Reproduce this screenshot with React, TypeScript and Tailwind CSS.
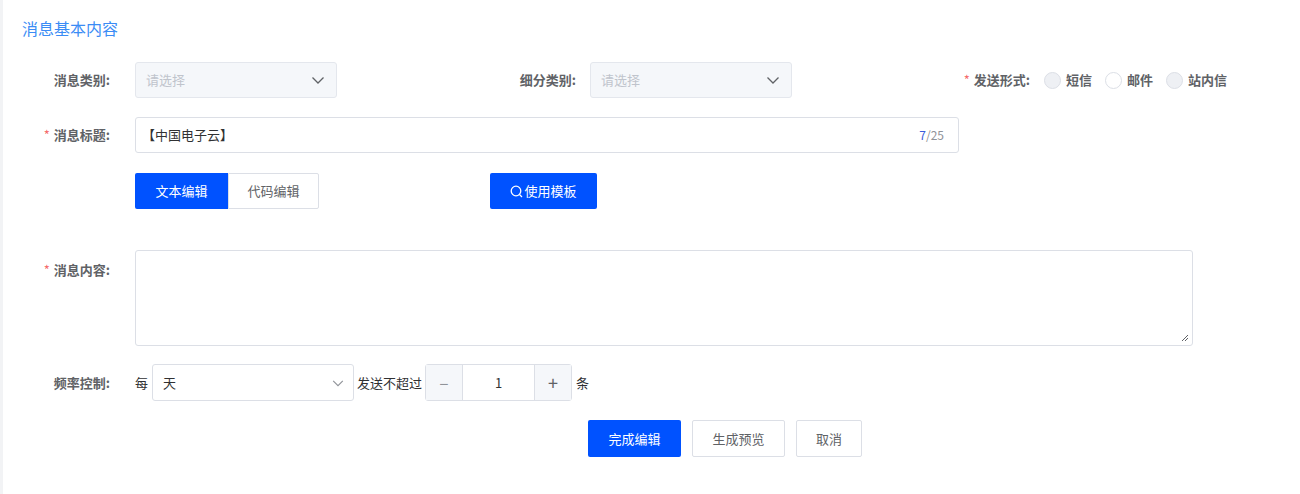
import React from "react";

const Chevron = ({ c = "#606266", s = 16 }: { c?: string; s?: number }) => (
  <svg width={s} height={s} viewBox="0 0 16 16" fill="none"><path d="M2.5 5.5L8 11l5.5-5.5" stroke={c} strokeWidth="1.3" /></svg>
);

const Label = ({ t, req, w = "w-[121px]" }: { t: string; req?: boolean; w?: string }) => (
  <div className={`${w} shrink-0 text-right pr-[14px] text-[13px] font-bold text-[#606266]`}>
    {req && <span className="text-[#f56c6c] mr-1 font-normal">*</span>}
    {t}
  </div>
);

const Radio = ({ t, grey }: { t: string; grey?: boolean }) => (
  <div className="flex items-center mr-[13px]">
    <span className={`w-[17px] h-[17px] rounded-full border border-[#dcdfe6] ${grey ? "bg-[#eef0f4]" : "bg-white"} mr-[5px]`} />
    <span className="text-[13px] font-bold text-[#606266]">{t}</span>
  </div>
);

export default function App() {
  return (
    <div className="w-[1300px] h-[494px] bg-white border-l-[3px] border-[#f2f3f5] text-[13px] text-[#303133]" style={{ fontFamily: '"Noto Sans CJK SC","Liberation Sans",sans-serif' }}>
      <div className="pt-[16px] pl-[19px] text-[16px] text-[#3b8cf5] leading-[24px]">消息基本内容</div>
      <div className="pl-0">
        <div className="flex items-center mt-[22px] h-[36px]">
          <Label t="消息类别:" />
          <div className="w-[202px] h-[36px] ml-[11px] bg-[#f5f7fa] border border-[#e4e7ed] rounded-[3px] flex items-center justify-between px-[10px] text-[#c0c4cc]">
            请选择<Chevron />
          </div>
          <div className="w-[253px] text-right pr-[14px] text-[13px] font-bold text-[#606266]">细分类别:</div>
          <div className="w-[202px] h-[36px] bg-[#f5f7fa] border border-[#e4e7ed] rounded-[3px] flex items-center justify-between px-[10px] text-[#c0c4cc]">
            请选择<Chevron />
          </div>
          <div className="w-[252px] text-right pr-[14px] text-[13px] font-bold text-[#606266]"><span className="text-[#f56c6c] mr-1 font-normal">*</span>发送形式:</div>
          <Radio t="短信" grey />
          <Radio t="邮件" />
          <Radio t="站内信" grey />
        </div>
        <div className="flex items-center mt-[19px] h-[36px]">
          <Label t="消息标题:" req />
          <div className="w-[824px] h-[36px] ml-[11px] border border-[#dcdfe6] rounded-[3px] flex items-center justify-between pl-[6px] pr-[14px]">
            <span className="text-[#303133]">【中国电子云】</span>
            <span className="text-[12px] text-[#909399]"><span className="text-[#3b5bdb]">7</span>/25</span>
          </div>
        </div>
        <div className="flex items-center mt-[20px] h-[36px] ml-[132px]">
          <div className="w-[93px] h-[36px] bg-[#0052ff] text-white flex items-center justify-center rounded-l-[2px]">文本编辑</div>
          <div className="w-[91px] h-[36px] border border-[#dcdfe6] text-[#606266] flex items-center justify-center rounded-r-[2px]">代码编辑</div>
          <div className="ml-[171px] w-[107px] h-[36px] bg-[#0052ff] text-white flex items-center justify-center rounded-[2px]">
            <svg width="13" height="13" viewBox="0 0 13 13" fill="none" className="mr-[1px]"><circle cx="6" cy="6" r="4.8" stroke="white" strokeWidth="1.3" /><path d="M9.5 9.5l2.5 2.5" stroke="white" strokeWidth="1.3" /></svg>
            使用模板
          </div>
        </div>
        <div className="flex mt-[41px]">
          <div className="pt-[10px]"><Label t="消息内容:" req /></div>
          <div className="relative w-[1058px] h-[96px] ml-[11px] border border-[#dcdfe6] rounded-[3px]">
            <svg className="absolute right-[3px] bottom-[3px]" width="8" height="8" viewBox="0 0 8 8"><path d="M7 1L1 7M7 4L4 7" stroke="#606266" strokeWidth="1" /></svg>
          </div>
        </div>
        <div className="flex items-center mt-[18px] h-[37px]">
          <Label t="频率控制:" />
          <span className="ml-[11px] text-[#303133]">每</span>
          <div className="w-[202px] h-[37px] ml-[4px] border border-[#dcdfe6] rounded-[3px] flex items-center justify-between pl-[10px] pr-[8px]">
            <span>天</span><Chevron c="#909399" s={14} />
          </div>
          <span className="ml-[3px]">发送不超过</span>
          <div className="ml-[3px] w-[147px] h-[37px] border border-[#dcdfe6] rounded-[3px] flex">
            <div className="w-[37px] bg-[#f5f7fa] border-r border-[#dcdfe6] flex items-center justify-center text-[#909399] text-[16px]">−</div>
            <div className="flex-1 flex items-center justify-center">1</div>
            <div className="w-[37px] bg-[#f5f7fa] border-l border-[#dcdfe6] flex items-center justify-center text-[#606266] text-[18px]">+</div>
          </div>
          <span className="ml-[4px]">条</span>
        </div>
        <div className="flex items-center mt-[19px] ml-[585px] h-[37px]">
          <div className="w-[93px] h-[37px] bg-[#0052ff] text-white flex items-center justify-center rounded-[2px]">完成编辑</div>
          <div className="ml-[11px] w-[93px] h-[37px] border border-[#dcdfe6] text-[#606266] flex items-center justify-center rounded-[2px]">生成预览</div>
          <div className="ml-[11px] w-[66px] h-[37px] border border-[#dcdfe6] text-[#606266] flex items-center justify-center rounded-[2px]">取消</div>
        </div>
      </div>
    </div>
  );
}
